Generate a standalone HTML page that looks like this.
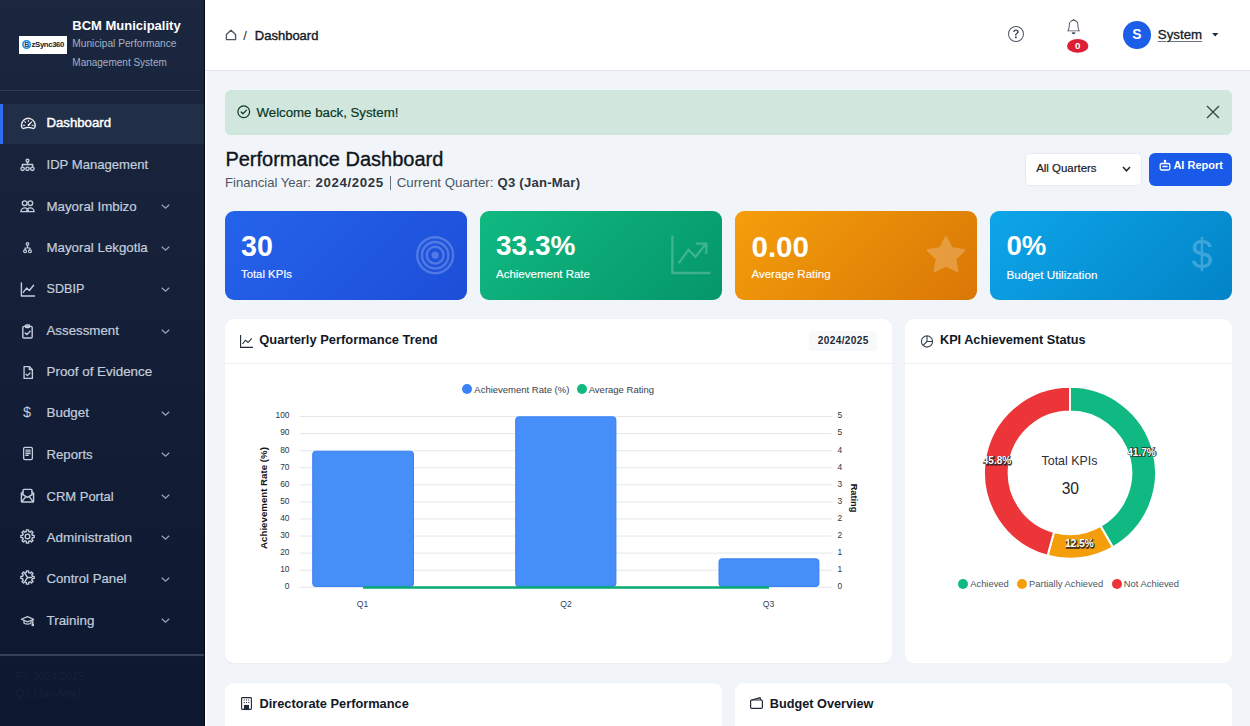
<!DOCTYPE html>
<html><head><meta charset="utf-8">
<style>
*{box-sizing:border-box;margin:0;padding:0}
html,body{width:1250px;height:726px;overflow:hidden;background:#f1f5f9;font-family:"Liberation Sans",sans-serif}
.t{position:absolute;line-height:1;white-space:nowrap}
.a{position:absolute}
svg{position:absolute;overflow:visible}
</style></head><body>
<div class="a" style="left:0;top:0;width:204px;height:726px;background:linear-gradient(180deg,#1b273f 0%,#141f37 50%,#0c1730 100%)"></div>
<div class="a" style="left:204px;top:0;width:1px;height:726px;background:#050a18"></div>
<div class="a" style="left:205px;top:0;width:2px;height:726px;background:#fbfcfd"></div>
<div class="a" style="left:19px;top:36px;width:48px;height:18px;background:#fff"></div>
<svg style="left:22px;top:39.6px" width="9.5" height="9" viewBox="0 0 9.5 9"><circle cx="4.6" cy="4.5" r="3.7" fill="none" stroke="#1b8fe0" stroke-width="1.6"/><text x="4.7" y="7.1" font-size="7" font-weight="700" fill="#0b3c7a" text-anchor="middle" font-family="Liberation Sans">B</text></svg>
<div class="t " style="left:31.6px;top:41.38px;font-size:7.8px;font-weight:700;color:#222;letter-spacing:-0.4px">zSync360</div>
<div class="t " style="left:72.3px;top:19.00px;font-size:13px;font-weight:700;color:#ffffff;">BCM Municipality</div>
<div class="t " style="left:72.3px;top:38.97px;font-size:10.2px;font-weight:400;color:#a3b1c6;">Municipal Performance</div>
<div class="t " style="left:72.3px;top:57.99px;font-size:10.0px;font-weight:400;color:#a3b1c6;">Management System</div>
<div class="a" style="left:0;top:90px;width:200px;height:1px;background:#2f3b52"></div>
<div class="a" style="left:0;top:104px;width:204px;height:40px;background:#212e47"></div>
<div class="a" style="left:0;top:104px;width:3px;height:40px;background:#2f6cf0"></div>
<div class="t " style="left:46.5px;top:116.48px;font-size:13.2px;font-weight:400;color:#ffffff;-webkit-text-stroke:0.45px #ffffff">Dashboard</div>
<div class="t " style="left:46.5px;top:158.49px;font-size:13.1px;font-weight:400;color:#c3cddc;-webkit-text-stroke:0.2px #c3cddc">IDP Management</div>
<div class="t " style="left:46.5px;top:199.96px;font-size:13.3px;font-weight:400;color:#c3cddc;-webkit-text-stroke:0.2px #c3cddc">Mayoral Imbizo</div>
<svg style="left:161px;top:204.0px" width="9" height="5" viewBox="0 0 9 5"><path d="M0.8 0.8 L4.5 4.2 L8.2 0.8" fill="none" stroke="#9aa6b8" stroke-width="1.2"/></svg>
<div class="t " style="left:46.5px;top:241.46px;font-size:13.3px;font-weight:400;color:#c3cddc;-webkit-text-stroke:0.2px #c3cddc">Mayoral Lekgotla</div>
<svg style="left:161px;top:245.5px" width="9" height="5" viewBox="0 0 9 5"><path d="M0.8 0.8 L4.5 4.2 L8.2 0.8" fill="none" stroke="#9aa6b8" stroke-width="1.2"/></svg>
<div class="t " style="left:46.5px;top:283.06px;font-size:12.6px;font-weight:400;color:#c3cddc;-webkit-text-stroke:0.2px #c3cddc">SDBIP</div>
<svg style="left:161px;top:287.0px" width="9" height="5" viewBox="0 0 9 5"><path d="M0.8 0.8 L4.5 4.2 L8.2 0.8" fill="none" stroke="#9aa6b8" stroke-width="1.2"/></svg>
<div class="t " style="left:46.5px;top:324.46px;font-size:13.3px;font-weight:400;color:#c3cddc;-webkit-text-stroke:0.2px #c3cddc">Assessment</div>
<svg style="left:161px;top:328.5px" width="9" height="5" viewBox="0 0 9 5"><path d="M0.8 0.8 L4.5 4.2 L8.2 0.8" fill="none" stroke="#9aa6b8" stroke-width="1.2"/></svg>
<div class="t " style="left:46.5px;top:365.45px;font-size:13.4px;font-weight:400;color:#c3cddc;-webkit-text-stroke:0.2px #c3cddc">Proof of Evidence</div>
<div class="t " style="left:46.5px;top:406.45px;font-size:13.4px;font-weight:400;color:#c3cddc;-webkit-text-stroke:0.2px #c3cddc">Budget</div>
<svg style="left:161px;top:410.5px" width="9" height="5" viewBox="0 0 9 5"><path d="M0.8 0.8 L4.5 4.2 L8.2 0.8" fill="none" stroke="#9aa6b8" stroke-width="1.2"/></svg>
<div class="t " style="left:46.5px;top:447.98px;font-size:13.2px;font-weight:400;color:#c3cddc;-webkit-text-stroke:0.2px #c3cddc">Reports</div>
<svg style="left:161px;top:452.0px" width="9" height="5" viewBox="0 0 9 5"><path d="M0.8 0.8 L4.5 4.2 L8.2 0.8" fill="none" stroke="#9aa6b8" stroke-width="1.2"/></svg>
<div class="t " style="left:46.5px;top:489.50px;font-size:13.0px;font-weight:400;color:#c3cddc;-webkit-text-stroke:0.2px #c3cddc">CRM Portal</div>
<svg style="left:161px;top:493.5px" width="9" height="5" viewBox="0 0 9 5"><path d="M0.8 0.8 L4.5 4.2 L8.2 0.8" fill="none" stroke="#9aa6b8" stroke-width="1.2"/></svg>
<div class="t " style="left:46.5px;top:530.94px;font-size:13.5px;font-weight:400;color:#c3cddc;-webkit-text-stroke:0.2px #c3cddc">Administration</div>
<svg style="left:161px;top:535.0px" width="9" height="5" viewBox="0 0 9 5"><path d="M0.8 0.8 L4.5 4.2 L8.2 0.8" fill="none" stroke="#9aa6b8" stroke-width="1.2"/></svg>
<div class="t " style="left:46.5px;top:572.48px;font-size:13.2px;font-weight:400;color:#c3cddc;-webkit-text-stroke:0.2px #c3cddc">Control Panel</div>
<svg style="left:161px;top:576.5px" width="9" height="5" viewBox="0 0 9 5"><path d="M0.8 0.8 L4.5 4.2 L8.2 0.8" fill="none" stroke="#9aa6b8" stroke-width="1.2"/></svg>
<div class="t " style="left:46.5px;top:613.95px;font-size:13.4px;font-weight:400;color:#c3cddc;-webkit-text-stroke:0.2px #c3cddc">Training</div>
<svg style="left:161px;top:618.0px" width="9" height="5" viewBox="0 0 9 5"><path d="M0.8 0.8 L4.5 4.2 L8.2 0.8" fill="none" stroke="#9aa6b8" stroke-width="1.2"/></svg>
<svg style="left:20.6px;top:116.1px" width="14.7" height="14.7" viewBox="0 0 16 16" fill="#fff"><path d="M8 4a.5.5 0 0 1 .5.5V6a.5.5 0 0 1-1 0V4.5A.5.5 0 0 1 8 4M3.732 5.732a.5.5 0 0 1 .707 0l.915.914a.5.5 0 1 1-.708.708l-.914-.915a.5.5 0 0 1 0-.707M2 10a.5.5 0 0 1 .5-.5h1.586a.5.5 0 0 1 0 1H2.5A.5.5 0 0 1 2 10m9.5 0a.5.5 0 0 1 .5-.5h1.5a.5.5 0 0 1 0 1H12a.5.5 0 0 1-.5-.5m.754-4.246a.39.39 0 0 0-.527-.02L7.547 9.310a.91.91 0 1 0 1.302 1.258l3.434-4.297a.39.39 0 0 0-.029-.518z"/><path fill-rule="evenodd" d="M0 10a8 8 0 1 1 15.547 2.661c-.442 1.253-1.845 1.602-2.932 1.250C11.309 13.488 9.475 13 8 13c-1.474 0-3.310.488-4.615.911-1.087.352-2.490.003-2.932-1.250A8 8 0 0 1 0 10m8-7a7 7 0 0 0-6.603 9.329c.203.575.923.876 1.680.630C4.397 12.533 6.358 12 8 12s3.604.532 4.923.960c.757.245 1.477-.056 1.680-.631A7 7 0 0 0 8 3" stroke="#fff" stroke-width="0.35"/></svg>
<svg style="left:20.0px;top:157.5px" width="15" height="15" viewBox="0 0 16 16" fill="none" stroke="#c3cddc" stroke-width="1.5" stroke-linecap="round" stroke-linejoin="round"><circle cx="8" cy="2.8" r="1.5"/><path d="M8 4.3V7M2.5 9V7h11v2"/><circle cx="2.8" cy="11.5" r="1.8"/><circle cx="8" cy="11.5" r="1.8"/><circle cx="13.2" cy="11.5" r="1.8"/></svg>
<svg style="left:20.0px;top:199.0px" width="15" height="15" viewBox="0 0 16 16" fill="none" stroke="#c3cddc" stroke-width="1.5" stroke-linecap="round" stroke-linejoin="round"><circle cx="5" cy="4.5" r="2.5"/><circle cx="11" cy="4.5" r="2.5"/><path d="M1 13.5c0-2.5 2-4 4-4s4 1.5 4 4zM7 13.5c.3-2.5 2-4 4-4s4 1.5 4 4z"/></svg>
<svg style="left:21.0px;top:241.0px" width="13" height="14" viewBox="0 0 16 16" fill="none" stroke="#c3cddc" stroke-width="1.5" stroke-linecap="round" stroke-linejoin="round"><circle cx="8" cy="3" r="1.6"/><path d="M8 4.6V7M5 10V8h6v2"/><circle cx="5" cy="12" r="1.8"/><circle cx="11" cy="12" r="1.8"/></svg>
<svg style="left:20.0px;top:281.5px" width="15" height="15" viewBox="0 0 16 16" fill="none" stroke="#c3cddc" stroke-width="1.5" stroke-linecap="round" stroke-linejoin="round"><path d="M1.5 1v14h14"/><path d="M3.5 11l3.5-4.5 3 2.5 4.5-5.5"/></svg>
<svg style="left:20.0px;top:323.5px" width="15" height="15" viewBox="0 0 16 16" fill="none" stroke="#c3cddc" stroke-width="1.5" stroke-linecap="round" stroke-linejoin="round"><rect x="3" y="2.5" width="10" height="12.5" rx="1.2"/><rect x="5.8" y="1" width="4.4" height="2.8" rx=".8"/><path d="M5.5 9.5l1.8 1.8 3.5-3.5"/></svg>
<svg style="left:20.5px;top:364.5px" width="14" height="15" viewBox="0 0 16 16" fill="none" stroke="#c3cddc" stroke-width="1.5" stroke-linecap="round" stroke-linejoin="round"><path d="M3.5 1.2h6l3.5 3.5v10.1h-9.5z"/><path d="M9.5 1.2v3.5h3.5"/><path d="M5.8 10l1.6 1.6 3-3"/></svg>
<div class="t" style="left:23px;top:404.5px;font-size:14.5px;color:#c3cddc">$</div>
<svg style="left:20.5px;top:446.3px" width="14" height="15" viewBox="0 0 16 16" fill="none" stroke="#c3cddc" stroke-width="1.5" stroke-linecap="round" stroke-linejoin="round"><rect x="3" y="1" width="10" height="14" rx="1.6"/><path d="M5.6 4.2h4.8M5.6 6.2h4.8M5.6 8.2h4.8M5.6 10.2h2.6"/></svg>
<svg style="left:20.0px;top:488.2px" width="15" height="15" viewBox="0 0 16 16" fill="none" stroke="#c3cddc" stroke-width="1.5" stroke-linecap="round" stroke-linejoin="round"><path d="M3.2 6.8V2.6a1.1 1.1 0 0 1 1.1-1.1h7.4a1.1 1.1 0 0 1 1.1 1.1v4.2"/><path d="M3.2 4.3 L1.5 5.4 V13.9 a1.1 1.1 0 0 0 1.1 1.1 H13.4 a1.1 1.1 0 0 0 1.1-1.1 V5.4 L12.8 4.3"/><path d="M1.6 6.2 L8 10.1 L14.4 6.2M1.8 14.6 L6.3 9.2M14.2 14.6 L9.7 9.2"/></svg>
<svg style="left:20.0px;top:529.0px" width="15" height="15" viewBox="0 0 16 16" fill="none" stroke="#c3cddc" stroke-width="1.5" stroke-linecap="round" stroke-linejoin="round"><path d="M6.78 2.74 L6.82 0.90 L9.18 0.90 L9.22 2.74 L10.86 3.42 L12.19 2.14 L13.86 3.81 L12.58 5.14 L13.26 6.78 L15.10 6.82 L15.10 9.18 L13.26 9.22 L12.58 10.86 L13.86 12.19 L12.19 13.86 L10.86 12.58 L9.22 13.26 L9.18 15.10 L6.82 15.10 L6.78 13.26 L5.14 12.58 L3.81 13.86 L2.14 12.19 L3.42 10.86 L2.74 9.22 L0.90 9.18 L0.90 6.82 L2.74 6.78 L3.42 5.14 L2.14 3.81 L3.81 2.14 L5.14 3.42Z"/><circle cx="8" cy="8" r="2.5"/></svg>
<svg style="left:20.0px;top:570.0px" width="15" height="15" viewBox="0 0 16 16" fill="none" stroke="#c3cddc" stroke-width="1.5" stroke-linecap="round" stroke-linejoin="round"><path d="M6.78 2.74 L6.82 0.90 L9.18 0.90 L9.22 2.74 L10.86 3.42 L12.19 2.14 L13.86 3.81 L12.58 5.14 L13.26 6.78 L15.10 6.82 L15.10 9.18 L13.26 9.22 L12.58 10.86 L13.86 12.19 L12.19 13.86 L10.86 12.58 L9.22 13.26 L9.18 15.10 L6.82 15.10 L6.78 13.26 L5.14 12.58 L3.81 13.86 L2.14 12.19 L3.42 10.86 L2.74 9.22 L0.90 9.18 L0.90 6.82 L2.74 6.78 L3.42 5.14 L2.14 3.81 L3.81 2.14 L5.14 3.42Z"/><path d="M8 8H12.5M8 8L5.6 4.3M8 8L5.6 11.7"/></svg>
<svg style="left:20.0px;top:614.0px" width="15" height="14" viewBox="0 0 16 16" fill="none" stroke="#c3cddc" stroke-width="1.5" stroke-linecap="round" stroke-linejoin="round"><path d="M1 6 L8 3 L15 6 L8 9 Z"/><path d="M4 7.5v3c1 1.3 7 1.3 8 0v-3"/><path d="M14 6.5v5"/><circle cx="14" cy="12.5" r=".8" fill="#c3cddc"/></svg>
<div class="a" style="left:0;top:654px;width:204px;height:2px;background:#394159"></div>
<div class="t " style="left:15.5px;top:670.76px;font-size:11px;font-weight:400;color:#172138;">FY 2024/2025</div>
<div class="t " style="left:15.5px;top:688.16px;font-size:11px;font-weight:400;color:#172138;">Q3 (Jan-Mar)</div>
<div class="a" style="left:205px;top:0;width:1045px;height:71px;background:#fff;border-bottom:1px solid #e4e3ef"></div>
<svg style="left:224.5px;top:28.8px" width="12" height="11.5" viewBox="0 0 12 11.5" fill="none" stroke="#4b5563" stroke-width="1.35" stroke-linejoin="round"><path d="M1.4 5.6 L6 1.2 L10.6 5.6 V10.6 H1.4 Z"/></svg>
<div class="t " style="left:243.3px;top:28.60px;font-size:13px;font-weight:400;color:#212529;">/</div>
<div class="t " style="left:254.8px;top:28.60px;font-size:13.0px;font-weight:400;color:#141a26;-webkit-text-stroke:0.4px #141a26">Dashboard</div>
<svg style="left:1008px;top:26px" width="16" height="16" viewBox="0 0 16 16" fill="#4b5563"><path d="M8 15A7 7 0 1 1 8 1a7 7 0 0 1 0 14m0 1A8 8 0 1 0 8 0a8 8 0 0 0 0 16"/><path d="M5.255 5.786a.237.237 0 0 0 .241.247h.825c.138 0 .248-.113.266-.25.09-.656.54-1.134 1.342-1.134.686 0 1.314.343 1.314 1.168 0 .635-.374.927-.965 1.371-.673.489-1.206 1.06-1.168 1.987l.003.217a.25.25 0 0 0 .25.246h.811a.25.25 0 0 0 .25-.25v-.105c0-.718.273-.927 1.01-1.486.609-.463 1.244-.977 1.244-2.056 0-1.511-1.276-2.241-2.673-2.241-1.267 0-2.655.59-2.75 2.286m1.557 5.763c0 .533.425.927 1.01.927.609 0 1.028-.394 1.028-.927 0-.552-.42-.94-1.029-.94-.584 0-1.009.388-1.009.94" fill="#374151"/></svg>
<svg style="left:1065.8px;top:19.2px" width="15.2" height="15.2" viewBox="0 0 16 16" fill="#4b5563"><path d="M8 16a2 2 0 0 0 2-2H6a2 2 0 0 0 2 2M8 1.918l-.797.161A4 4 0 0 0 4 6c0 .628-.134 2.197-.459 3.742-.16.767-.376 1.566-.663 2.258h10.244c-.287-.692-.502-1.49-.663-2.258C12.134 8.197 12 6.628 12 6a4 4 0 0 0-3.203-3.92zM14.22 12c.223.447.481.801.78 1H1c.299-.199.557-.553.78-1C2.68 10.2 3 6.880 3 6c0-2.42 1.72-4.440 4.005-4.901a1 1 0 1 1 1.99 0A5 5 0 0 1 13 6c0 .88.32 4.2 1.22 6"/></svg>
<svg style="left:1066.8px;top:39.2px" width="21.4" height="13.8" viewBox="0 0 21.4 13.8"><ellipse cx="10.7" cy="6.9" rx="10.7" ry="6.9" fill="#dc1f34"/><text x="10.7" y="10.5" font-size="9.8" font-weight="700" fill="#fff" text-anchor="middle" font-family="Liberation Sans">0</text></svg>
<div class="a" style="left:1123px;top:21px;width:28px;height:28px;border-radius:50%;background:#1d5ee8"></div>
<div class="t " style="left:1132.2px;top:27.70px;font-size:13.8px;font-weight:700;color:#fff;">S</div>
<div class="t " style="left:1157.8px;top:28.06px;font-size:13.3px;font-weight:400;color:#141a26;-webkit-text-stroke:0.3px #141a26;text-decoration:underline;text-decoration-color:#6b7280;text-underline-offset:2px;text-decoration-thickness:1px">System</div>
<svg style="left:1212.2px;top:33px" width="6.5" height="3.6" viewBox="0 0 7 4"><path d="M0 0H7L3.5 4Z" fill="#1f2937"/></svg>
<div class="a" style="left:224.5px;top:89.5px;width:1007.5px;height:45px;border-radius:6px;background:#d1e7dd;border:1px solid #c9e8da"></div>
<svg style="left:236.5px;top:104.5px" width="13.5" height="13.5" viewBox="0 0 14 14" fill="none" stroke="#0d3a26" stroke-width="1.3" stroke-linecap="round" stroke-linejoin="round"><circle cx="7" cy="7" r="6.1"/><path d="M4.3 7.2l1.9 1.9 3.6-3.8"/></svg>
<div class="t " style="left:256.5px;top:105.77px;font-size:13.25px;font-weight:400;color:#0a3622;-webkit-text-stroke:0.2px #0a3622">Welcome back, System!</div>
<svg style="left:1206px;top:105px" width="14" height="14" viewBox="0 0 14 14" fill="none" stroke="#3a4a42" stroke-width="1.4"><path d="M1 1L13 13M13 1L1 13"/></svg>
<div class="t " style="left:225.4px;top:148.89px;font-size:20.0px;font-weight:400;color:#0f1420;-webkit-text-stroke:0.35px #0f1420">Performance Dashboard</div>
<div class="t " style="left:225px;top:175.69px;font-size:13.1px;font-weight:400;color:#4b5563;">Financial Year:</div>
<div class="t " style="left:315.4px;top:175.66px;font-size:13.3px;font-weight:700;color:#2f3640;letter-spacing:0.62px">2024/2025</div>
<div class="a" style="left:390.2px;top:175.5px;width:1.2px;height:14px;background:#6b7280"></div>
<div class="t " style="left:396.7px;top:175.66px;font-size:13.3px;font-weight:400;color:#4b5563;">Current Quarter:</div>
<div class="t " style="left:497.6px;top:175.69px;font-size:13.1px;font-weight:700;color:#2f3640;letter-spacing:0.22px">Q3 (Jan-Mar)</div>
<div class="a" style="left:1024.5px;top:152.5px;width:117px;height:33px;border-radius:5px;background:#fff;border:1px solid #e8ecf1"></div>
<div class="t " style="left:1036.2px;top:163.31px;font-size:11.45px;font-weight:400;color:#1a2028;-webkit-text-stroke:0.2px #1a2028">All Quarters</div>
<svg style="left:1121.5px;top:166px" width="9" height="6" viewBox="0 0 9 6"><path d="M1 1 L4.5 4.8 L8 1" fill="none" stroke="#1f2630" stroke-width="1.5"/></svg>
<div class="a" style="left:1149px;top:152.5px;width:83px;height:33px;border-radius:6px;background:#1a5ae8"></div>
<svg style="left:1158.5px;top:159.5px" width="12" height="11" viewBox="0 0 12 11" fill="none" stroke="#fff" stroke-width="1.3"><rect x="1.2" y="3.5" width="9.6" height="6.5" rx="1.5"/><path d="M6 1v2.5M3.5 6.5h5"/><circle cx="6" cy="1" r=".6" fill="#fff"/></svg>
<div class="t " style="left:1173.4px;top:160.16px;font-size:11px;font-weight:700;color:#fff;">AI Report</div>
<div class="a" style="left:224.5px;top:211px;width:242px;height:88.5px;border-radius:9px;background:linear-gradient(135deg,#2563eb,#1d4ed8)"></div>
<div class="t " style="left:241.0px;top:232.07px;font-size:28.6px;font-weight:700;color:#fff;">30</div>
<div class="t " style="left:241.0px;top:269.22px;font-size:11.33px;font-weight:400;color:#fff;-webkit-text-stroke:0.15px #fff">Total KPIs</div>
<div class="a" style="left:479.5px;top:211px;width:242px;height:88.5px;border-radius:9px;background:linear-gradient(135deg,#10b981,#059669)"></div>
<div class="t " style="left:496.0px;top:232.15px;font-size:28.0px;font-weight:700;color:#fff;">33.3%</div>
<div class="t " style="left:496.0px;top:269.20px;font-size:11.5px;font-weight:400;color:#fff;-webkit-text-stroke:0.15px #fff">Achievement Rate</div>
<div class="a" style="left:735px;top:211px;width:242px;height:88.5px;border-radius:9px;background:linear-gradient(135deg,#f59e0b,#d97706)"></div>
<div class="t " style="left:751.5px;top:231.95px;font-size:29.5px;font-weight:700;color:#fff;">0.00</div>
<div class="t " style="left:751.5px;top:269.20px;font-size:11.5px;font-weight:400;color:#fff;-webkit-text-stroke:0.15px #fff">Average Rating</div>
<div class="a" style="left:990px;top:211px;width:242px;height:88.5px;border-radius:9px;background:linear-gradient(135deg,#0ea5e9,#0284c7)"></div>
<div class="t " style="left:1006.5px;top:232.20px;font-size:27.6px;font-weight:700;color:#fff;">0%</div>
<div class="t " style="left:1006.5px;top:268.67px;font-size:11.7px;font-weight:400;color:#fff;-webkit-text-stroke:0.15px #fff">Budget Utilization</div>
<svg style="left:416px;top:235.5px" width="38.4" height="38.4" viewBox="0 0 16 16" fill="#fff" opacity="0.22"><path fill-rule="evenodd" d="M8 15A7 7 0 1 1 8 1a7 7 0 0 1 0 14m0 1A8 8 0 1 0 8 0a8 8 0 0 0 0 16M8 13A5 5 0 1 1 8 3a5 5 0 0 1 0 10m0 1A6 6 0 1 0 8 2a6 6 0 0 0 0 12M8 11a3 3 0 1 1 0-6 3 3 0 0 1 0 6m0 1a4 4 0 1 0 0-8 4 4 0 0 0 0 8M9.5 8a1.5 1.5 0 1 1-3 0 1.5 1.5 0 0 1 3 0"/></svg>
<svg style="left:670px;top:234px" width="42" height="41" viewBox="0 0 42 41" fill="none" stroke="#fff" stroke-width="2.3" stroke-linejoin="miter" opacity="0.22"><path d="M2.4 1.5 V39 H40.5"/><path d="M8.6 29.4 L18.5 15.8 L25.5 22.8 L36.3 9.6 M26 9.6 H36.3 V20"/></svg>
<svg style="left:926.5px;top:236.2px" width="38" height="36.5" viewBox="0.1 0.45 15.8 15.15" fill="#fff" opacity="0.22"><path d="M3.612 15.443c-.386.198-.824-.149-.746-.592l.83-4.73L.173 6.765c-.329-.314-.158-.888.283-.95l4.898-.696L7.538.792c.197-.39.73-.39.927 0l2.184 4.327 4.898.696c.441.062.612.636.282.95l-3.522 3.356.83 4.73c.078.443-.36.79-.746.592L8 13.187l-4.389 2.256z"/></svg>
<svg style="left:1191.5px;top:237.3px" width="20" height="34" viewBox="4 1 8.3 14" fill="#fff" opacity="0.22" preserveAspectRatio="none"><path d="M4 10.781c.148 1.667 1.513 2.85 3.591 3.003V15h1.043v-1.216c2.27-.179 3.678-1.438 3.678-3.3 0-1.59-.947-2.51-2.956-3.028l-.722-.187V3.467c1.122.11 1.879.714 2.07 1.616h1.47c-.166-1.6-1.54-2.748-3.54-2.875V1H7.591v1.233c-1.939.23-3.27 1.472-3.27 3.156 0 1.454.966 2.483 2.661 2.917l.61.162v4.031c-1.149-.17-1.94-.8-2.131-1.718zm3.391-3.836c-1.043-.263-1.6-.825-1.6-1.616 0-.944.704-1.641 1.8-1.828v3.495l-.2-.05zm1.591 1.872c1.287.323 1.852.859 1.852 1.769 0 1.097-.826 1.828-2.2 1.939V8.73z"/></svg>
<div class="a" style="left:224.5px;top:319px;width:667px;height:344px;border-radius:9px;background:#fff;box-shadow:0 1px 2px rgba(15,23,42,0.04)"></div>
<div class="a" style="left:224.5px;top:362.5px;width:667px;height:1px;background:#eef1f5"></div>
<svg style="left:240px;top:335px" width="13" height="13" viewBox="0 0 13 13" fill="none" stroke="#1f2937" stroke-width="1.1"><path d="M0.6 0 V12.4 H13"/><path d="M2.5 9 L5.5 5.2 L8 7.5 L11.8 3.3"/></svg>
<div class="t " style="left:259.3px;top:334.12px;font-size:12.9px;font-weight:700;color:#111827;">Quarterly Performance Trend</div>
<div class="a" style="left:809px;top:330.5px;width:68px;height:20.5px;border-radius:4px;background:#f8f9fb"></div>
<div class="t " style="left:817.8px;top:335.58px;font-size:10.1px;font-weight:700;color:#1f2937;letter-spacing:0.36px">2024/2025</div>
<div class="a" style="left:462px;top:384.4px;width:10px;height:10px;border-radius:50%;background:#3b82f6"></div>
<div class="t " style="left:474.3px;top:384.56px;font-size:9.5px;font-weight:400;color:#3a404a;">Achievement Rate (%)</div>
<div class="a" style="left:577px;top:384.4px;width:10px;height:10px;border-radius:50%;background:#10b981"></div>
<div class="t " style="left:588.7px;top:384.56px;font-size:9.5px;font-weight:400;color:#3a404a;">Average Rating</div>
<svg style="left:0;top:0" width="1250" height="726" viewBox="0 0 1250 726" font-family="Liberation Sans"><line x1="299.5" y1="587.30" x2="831.8" y2="587.30" stroke="#e5e7eb" stroke-width="1"/><text x="289.5" y="589.20" font-size="8.4" fill="#2f3540" text-anchor="end">0</text><text x="837.6" y="589.20" font-size="8.4" fill="#2f3540">0</text><line x1="299.5" y1="570.22" x2="831.8" y2="570.22" stroke="#e5e7eb" stroke-width="1"/><text x="289.5" y="572.12" font-size="8.4" fill="#2f3540" text-anchor="end">10</text><text x="837.6" y="572.12" font-size="8.4" fill="#2f3540">1</text><line x1="299.5" y1="553.14" x2="831.8" y2="553.14" stroke="#e5e7eb" stroke-width="1"/><text x="289.5" y="555.04" font-size="8.4" fill="#2f3540" text-anchor="end">20</text><text x="837.6" y="555.04" font-size="8.4" fill="#2f3540">1</text><line x1="299.5" y1="536.06" x2="831.8" y2="536.06" stroke="#e5e7eb" stroke-width="1"/><text x="289.5" y="537.96" font-size="8.4" fill="#2f3540" text-anchor="end">30</text><text x="837.6" y="537.96" font-size="8.4" fill="#2f3540">2</text><line x1="299.5" y1="518.98" x2="831.8" y2="518.98" stroke="#e5e7eb" stroke-width="1"/><text x="289.5" y="520.88" font-size="8.4" fill="#2f3540" text-anchor="end">40</text><text x="837.6" y="520.88" font-size="8.4" fill="#2f3540">2</text><line x1="299.5" y1="501.90" x2="831.8" y2="501.90" stroke="#e5e7eb" stroke-width="1"/><text x="289.5" y="503.80" font-size="8.4" fill="#2f3540" text-anchor="end">50</text><text x="837.6" y="503.80" font-size="8.4" fill="#2f3540">3</text><line x1="299.5" y1="484.82" x2="831.8" y2="484.82" stroke="#e5e7eb" stroke-width="1"/><text x="289.5" y="486.72" font-size="8.4" fill="#2f3540" text-anchor="end">60</text><text x="837.6" y="486.72" font-size="8.4" fill="#2f3540">3</text><line x1="299.5" y1="467.74" x2="831.8" y2="467.74" stroke="#e5e7eb" stroke-width="1"/><text x="289.5" y="469.64" font-size="8.4" fill="#2f3540" text-anchor="end">70</text><text x="837.6" y="469.64" font-size="8.4" fill="#2f3540">4</text><line x1="299.5" y1="450.66" x2="831.8" y2="450.66" stroke="#e5e7eb" stroke-width="1"/><text x="289.5" y="452.56" font-size="8.4" fill="#2f3540" text-anchor="end">80</text><text x="837.6" y="452.56" font-size="8.4" fill="#2f3540">4</text><line x1="299.5" y1="433.58" x2="831.8" y2="433.58" stroke="#e5e7eb" stroke-width="1"/><text x="289.5" y="435.48" font-size="8.4" fill="#2f3540" text-anchor="end">90</text><text x="837.6" y="435.48" font-size="8.4" fill="#2f3540">5</text><line x1="299.5" y1="416.50" x2="831.8" y2="416.50" stroke="#e5e7eb" stroke-width="1"/><text x="289.5" y="418.40" font-size="8.4" fill="#2f3540" text-anchor="end">100</text><text x="837.6" y="418.40" font-size="8.4" fill="#2f3540">5</text><rect x="312.8" y="451.26000000000005" width="100.60000000000001" height="135.14" rx="3.5" fill="#468ff8" stroke="#3a82f7" stroke-width="1.2"/><rect x="515.8000000000001" y="416.90000000000003" width="99.99999999999993" height="169.5" rx="3.5" fill="#468ff8" stroke="#3a82f7" stroke-width="1.2"/><rect x="719.1" y="558.9" width="99.69999999999997" height="27.500000000000046" rx="3.5" fill="#468ff8" stroke="#3a82f7" stroke-width="1.2"/><line x1="363" y1="587.5" x2="769" y2="587.5" stroke="#07aa72" stroke-width="2.5"/><text x="362.5" y="607.3" font-size="8.6" fill="#374151" text-anchor="middle">Q1</text><text x="566" y="607.3" font-size="8.6" fill="#374151" text-anchor="middle">Q2</text><text x="768.5" y="607.3" font-size="8.6" fill="#374151" text-anchor="middle">Q3</text><text transform="translate(266.8 498) rotate(-90)" font-size="9.7" font-weight="700" fill="#111" text-anchor="middle">Achievement Rate (%)</text><text transform="translate(851 498) rotate(90)" font-size="9.2" font-weight="700" fill="#111" text-anchor="middle">Rating</text></svg>
<div class="a" style="left:905px;top:319px;width:327px;height:344px;border-radius:9px;background:#fff"></div>
<div class="a" style="left:905px;top:362.5px;width:327px;height:1px;background:#eef1f5"></div>
<svg style="left:919.5px;top:334.5px" width="14" height="13" viewBox="0 0 14 14" fill="none" stroke="#374151" stroke-width="1.2"><circle cx="7" cy="7" r="6"/><path d="M7 1V7H13M7 7L2.8 11.2"/></svg>
<div class="t " style="left:940px;top:334.24px;font-size:12.7px;font-weight:700;color:#111827;">KPI Achievement Status</div>
<svg style="left:0;top:0" width="1250" height="726" viewBox="0 0 1250 726" font-family="Liberation Sans"><path d="M1070.00 386.80 A86 86 0 0 1 1112.84 547.37 L1100.54 525.95 A61.3 61.3 0 0 0 1070.00 411.50 Z" fill="#10b981" stroke="#fff" stroke-width="2"/><path d="M1112.84 547.37 A86 86 0 0 1 1047.57 555.82 L1054.01 531.98 A61.3 61.3 0 0 0 1100.54 525.95 Z" fill="#f59e0b" stroke="#fff" stroke-width="2"/><path d="M1047.57 555.82 A86 86 0 0 1 1070.00 386.80 L1070.00 411.50 A61.3 61.3 0 0 0 1054.01 531.98 Z" fill="#ec3538" stroke="#fff" stroke-width="2"/><text x="1142.1" y="456.4" font-size="10" font-weight="700" fill="#222" stroke="#222" stroke-width="1.4" opacity="0.85" text-anchor="middle">41.7%</text><text x="1141.5" y="455.7" font-size="10" font-weight="700" fill="#fff" text-anchor="middle">41.7%</text><text x="1080.1" y="547.7" font-size="10" font-weight="700" fill="#222" stroke="#222" stroke-width="1.4" opacity="0.85" text-anchor="middle">12.5%</text><text x="1079.5" y="547.0" font-size="10" font-weight="700" fill="#fff" text-anchor="middle">12.5%</text><text x="997.6" y="465.0" font-size="10" font-weight="700" fill="#222" stroke="#222" stroke-width="1.4" opacity="0.85" text-anchor="middle">45.8%</text><text x="997" y="464.3" font-size="10" font-weight="700" fill="#fff" text-anchor="middle">45.8%</text></svg>
<div class="t " style="left:1041.6px;top:455.38px;font-size:12.4px;font-weight:400;color:#2a2f38;">Total KPIs</div>
<div class="t " style="left:1061.7px;top:480.56px;font-size:15.6px;font-weight:400;color:#1a1f28;">30</div>
<div class="a" style="left:958px;top:578.6px;width:10px;height:10px;border-radius:50%;background:#10b981"></div>
<div class="t " style="left:970.2px;top:578.77px;font-size:9.4px;font-weight:400;color:#4b5563;">Achieved</div>
<div class="a" style="left:1016.8px;top:578.6px;width:10px;height:10px;border-radius:50%;background:#f59e0b"></div>
<div class="t " style="left:1029.1px;top:578.77px;font-size:9.4px;font-weight:400;color:#4b5563;">Partially Achieved</div>
<div class="a" style="left:1111.7px;top:578.6px;width:10px;height:10px;border-radius:50%;background:#ec3538"></div>
<div class="t " style="left:1123.8px;top:578.77px;font-size:9.4px;font-weight:400;color:#4b5563;">Not Achieved</div>
<div class="a" style="left:224.5px;top:682.5px;width:497px;height:60px;border-radius:9px;background:#fff"></div>
<div class="a" style="left:735px;top:682.5px;width:497px;height:60px;border-radius:9px;background:#fff"></div>
<svg style="left:241px;top:697px" width="11" height="13" viewBox="0 0 11 13" fill="none" stroke="#1f2937" stroke-width="1.1"><rect x="0.6" y="0.6" width="9.8" height="11.8" rx=".8"/><path d="M2.8 3h1M5 3h1M7.2 3h1M2.8 5.5h1M5 5.5h1M7.2 5.5h1"/><rect x="3.5" y="8.5" width="4" height="4" fill="#1f2937"/></svg>
<div class="t " style="left:259.4px;top:697.93px;font-size:12.8px;font-weight:700;color:#111827;">Directorate Performance</div>
<svg style="left:750px;top:697px" width="13" height="12" viewBox="0 0 13 12" fill="none" stroke="#1f2937" stroke-width="1.2"><rect x="0.6" y="3" width="11.8" height="8.4" rx="1.2"/><path d="M1.5 3 L10 0.8 L11 3"/></svg>
<div class="t " style="left:769.8px;top:697.94px;font-size:12.7px;font-weight:700;color:#111827;">Budget Overview</div>
</body></html>
